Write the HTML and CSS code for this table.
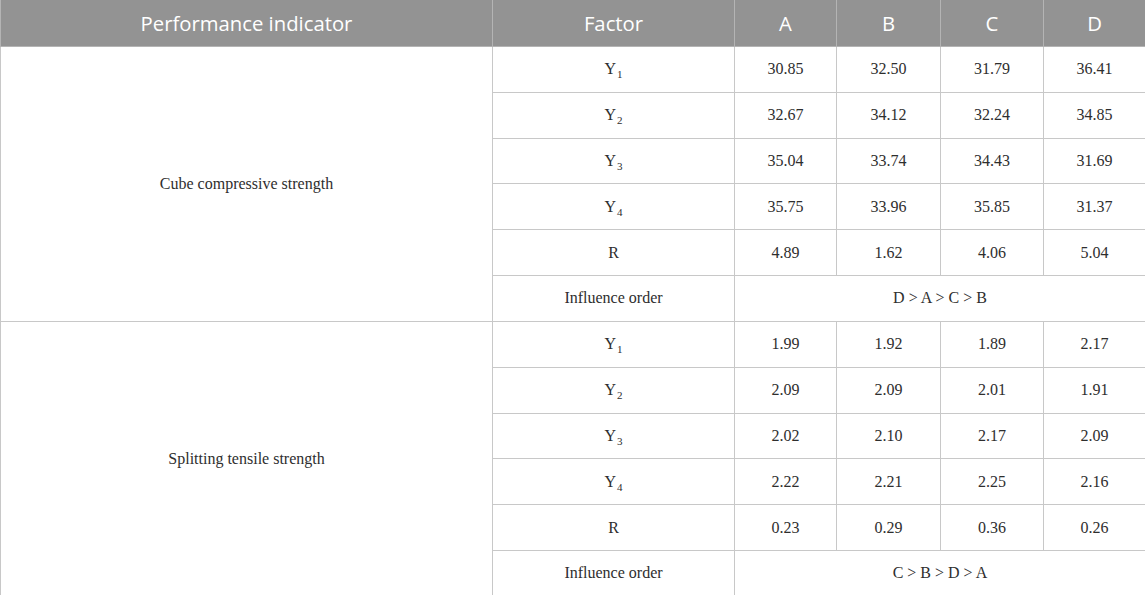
FILE: index.html
```html
<!DOCTYPE html>
<html>
<head>
<meta charset="utf-8">
<link rel="stylesheet" href="styles.css">
</head>
<body>
<table class="data">
  <colgroup>
    <col class="c-ind"><col class="c-fac"><col class="c-a"><col class="c-b"><col class="c-c"><col class="c-d">
  </colgroup>
  <thead>
    <tr><th>Performance indicator</th><th>Factor</th><th>A</th><th>B</th><th>C</th><th>D</th></tr>
  </thead>
  <tbody>
    <tr><td rowspan="6" class="group">Cube compressive strength</td><td>Y<sub>1</sub></td><td>30.85</td><td>32.50</td><td>31.79</td><td>36.41</td></tr>
    <tr><td>Y<sub>2</sub></td><td>32.67</td><td>34.12</td><td>32.24</td><td>34.85</td></tr>
    <tr><td>Y<sub>3</sub></td><td>35.04</td><td>33.74</td><td>34.43</td><td>31.69</td></tr>
    <tr><td>Y<sub>4</sub></td><td>35.75</td><td>33.96</td><td>35.85</td><td>31.37</td></tr>
    <tr><td>R</td><td>4.89</td><td>1.62</td><td>4.06</td><td>5.04</td></tr>
    <tr><td>Influence order</td><td colspan="4">D &gt; A &gt; C &gt; B</td></tr>
    <tr><td rowspan="6" class="group">Splitting tensile strength</td><td>Y<sub>1</sub></td><td>1.99</td><td>1.92</td><td>1.89</td><td>2.17</td></tr>
    <tr><td>Y<sub>2</sub></td><td>2.09</td><td>2.09</td><td>2.01</td><td>1.91</td></tr>
    <tr><td>Y<sub>3</sub></td><td>2.02</td><td>2.10</td><td>2.17</td><td>2.09</td></tr>
    <tr><td>Y<sub>4</sub></td><td>2.22</td><td>2.21</td><td>2.25</td><td>2.16</td></tr>
    <tr><td>R</td><td>0.23</td><td>0.29</td><td>0.36</td><td>0.26</td></tr>
    <tr><td>Influence order</td><td colspan="4">C &gt; B &gt; D &gt; A</td></tr>
  </tbody>
</table>
</body>
</html>
```
FILE: styles.css
```css
html, body {
  margin: 0;
  padding: 0;
  background: #ffffff;
}
.data {
  width: 1145px;
  border-collapse: collapse;
  table-layout: fixed;
}
.c-ind { width: 492px; }
.c-fac { width: 242px; }
.c-a { width: 102px; }
.c-b { width: 104px; }
.c-c { width: 103px; }
.c-d { width: 102px; }
.data th {
  background: #939393;
  color: #ffffff;
  font-family: "Open Sans", "Liberation Sans", sans-serif;
  font-weight: 400;
  font-size: 20.3px;
  height: 46px;
  padding: 0;
  text-align: center;
  vertical-align: middle;
  border: 1px solid #b4b4b4;
  border-top: none;
}
.data td {
  font-family: "Liberation Serif", "DejaVu Serif", serif;
  font-size: 16px;
  color: #2e2e2e;
  text-align: center;
  vertical-align: middle;
  height: 44.82px;
  padding: 0;
  border: 1px solid #c8c8c8;
}
.data sub {
  font-size: 11px;
  vertical-align: -4px;
  line-height: 0;
  margin-left: 1px;
}
```
